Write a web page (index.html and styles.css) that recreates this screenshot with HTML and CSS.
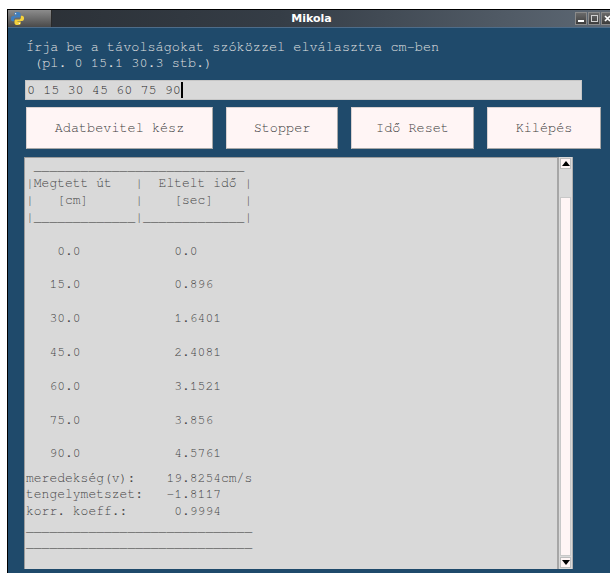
FILE: index.html
```html
<!DOCTYPE html>
<html lang="hu">
<head>
<meta charset="utf-8">
<title>Mikola</title>
<link rel="stylesheet" href="styles.css">
</head>
<body>
<div class="window">
  <div class="titlebar">
    <div class="tb-icon">
      <svg width="15" height="15" viewBox="0 0 16 16">
        <path d="M7.8 1C5 1 4.6 2.2 4.6 3.2V4.8H8V5.4H3.2C1.8 5.4 1 6.5 1 8.2S1.8 11 3.2 11H4.4V9.2C4.4 7.9 5.4 7 6.6 7H9.6C10.6 7 11.2 6.3 11.2 5.4V3.2C11.2 2 10.2 1 7.8 1Z" fill="#3f7fc0"/>
        <circle cx="6" cy="2.8" r="0.7" fill="#fff"/>
        <path d="M8.2 15C11 15 11.4 13.8 11.4 12.8V11.2H8V10.6H12.8C14.2 10.6 15 9.5 15 7.8S14.2 5 12.8 5H11.6V6.8C11.6 8.1 10.6 9 9.4 9H6.4C5.4 9 4.8 9.7 4.8 10.6V12.8C4.8 14 5.8 15 8.2 15Z" fill="#f5d23c"/>
        <circle cx="10" cy="13.2" r="0.7" fill="#fff"/>
      </svg>
    </div>
    <div class="tb-title">Mikola</div>
    <div class="tb-buttons">
      <span class="tb-btn"><span class="ic-min"></span></span>
      <span class="tb-btn"><span class="ic-max"></span></span>
      <span class="tb-btn">
        <svg width="7" height="7" viewBox="0 0 7 7"><path d="M1 1L6 6M6 1L1 6" stroke="#fff" stroke-width="1.6"/></svg>
      </span>
    </div>
  </div>

  <div class="client">
    <p class="prompt">Írja be a távolságokat szóközzel elválasztva cm-ben
 (pl. 0 15.1 30.3 stb.)</p>

    <div class="entry"><span>0 15 30 45 60 75 90</span><span class="caret"></span></div>

    <div class="buttons">
      <button class="btn btn-input">Adatbevitel kész</button>
      <button class="btn btn-stop">Stopper</button>
      <button class="btn btn-reset">Idő Reset</button>
      <button class="btn btn-quit">Kilépés</button>
    </div>

    <div class="output">
      <div class="text">
<pre class="table"> ___________________________
|Megtett út   |  Eltelt idő |
|   [cm]      |    [sec]    |
|_____________|_____________|

    0.0            0.0

   15.0            0.896

   30.0            1.6401

   45.0            2.4081

   60.0            3.1521

   75.0            3.856

   90.0            4.5761</pre>
<pre class="summary">meredekség(v):    19.8254cm/s
tengelymetszet:   -1.8117
korr. koeff.:      0.9994
_____________________________
_____________________________</pre>
      </div>
      <div class="scrollbar">
        <span class="sb-arrow up"></span>
        <span class="sb-trough"></span>
        <span class="sb-thumb"></span>
        <span class="sb-arrow down"></span>
      </div>
    </div>
  </div>
</div>
</body>
</html>
```

FILE: styles.css
```css
html, body {
  margin: 0;
  height: 573px;
  overflow: hidden;
  background: #ffffff;
}

.window {
  margin: 9px 0 0 7px;
  height: 563px;
  border-top: 1px solid #000;
  border-left: 1px solid #000;
  display: flex;
  flex-direction: column;
  background: #1f4a6b;
}

/* window manager title bar */
.titlebar {
  height: 17px;
  display: flex;
  align-items: center;
  background: linear-gradient(to right, #2a2f35 0%, #353d46 45%, #5d6874 100%);
  border-bottom: 1px solid #4e6d8a;
}

.tb-icon {
  width: 44px;
  height: 17px;
  display: flex;
  align-items: center;
  padding-left: 2px;
  box-sizing: border-box;
  background: linear-gradient(#8c8c8c, #4a4a4a);
  border-right: 1px solid #2a2a2a;
}

.tb-title {
  flex: 1;
  text-align: center;
  font: bold 11px "DejaVu Sans", sans-serif;
  color: #ffffff;
  padding-right: 4px;
}

.tb-buttons {
  display: flex;
  gap: 1px;
  width: 35px;
  overflow: hidden;
}

.tb-btn {
  flex: none;
  width: 12px;
  height: 13px;
  box-sizing: border-box;
  border: 1px solid #8a8a8a;
  background: linear-gradient(#6a6a6a, #3c3c3c);
  display: flex;
  align-items: center;
  justify-content: center;
}

.ic-min {
  width: 6px;
  height: 2px;
  background: #fff;
  margin-top: 5px;
}

.ic-max {
  width: 5px;
  height: 5px;
  border: 1px solid #d0d0d0;
}

/* application area; Tk "Courier" look */
.client {
  flex: 1;
  padding: 11px 0 0 16px;
  font-family: "Nimbus Mono PS", "Nimbus Mono L", "FreeMono", "Courier New", "Courier", "Liberation Mono", monospace;
}

.prompt {
  margin: 0 0 0 2px;
  font-size: 13.5px;
  line-height: 16px;
  color: #e2e2e2;
  white-space: pre;
}

.entry {
  margin: 9px 0 0 1px;
  width: 557px;
  height: 20px;
  box-sizing: border-box;
  background: #d9d9d9;
  border: 1px solid #c6c6c6;
  padding-left: 1px;
  display: flex;
  align-items: center;
  font-size: 13.5px;
  color: #2a2a2a;
  white-space: pre;
}

.caret {
  width: 2px;
  height: 16px;
  background: #000;
}

.buttons {
  margin: 7px 0 0 2px;
  display: flex;
  gap: 13px;
}

.btn {
  height: 42px;
  padding: 0;
  background: #fff5f5;
  border: 1px solid;
  border-color: #d8d0d0 #a8a8a8 #a8a8a8 #d8d0d0;
  font-family: inherit;
  font-size: 13.5px;
  color: #3a3a3a;
}

.btn-input { width: 187px; }
.btn-stop  { width: 112px; }
.btn-reset { width: 123px; }
.btn-quit  { width: 114px; }

/* results text box */
.output {
  margin-top: 8px;
  width: 549px;
  height: 412px;
  display: flex;
}

.text {
  flex: 1;
  background: #d9d9d9;
  border-top: 1px solid #9c9c9c;
  border-left: 1px solid #9c9c9c;
  padding: 1px 0 0 1px;
  overflow: hidden;
  color: #444;
  font-size: 13px;
}

.text pre {
  margin: 0;
  font-family: inherit;
  font-size: 13px;
}

.table {
  line-height: 16.9px;
}

.text .summary {
  margin-top: 7.6px;
  line-height: 16.3px;
}

.scrollbar {
  width: 16px;
  box-sizing: border-box;
  background: #d9d9d9;
  border-left: 2px solid #a6a6a6;
  border-right: 1px solid #b0b0b0;
  padding: 1px 1px 0 1px;
  display: flex;
  flex-direction: column;
}

.sb-arrow {
  height: 11px;
  flex: none;
  background: #fff5f5;
  border: 1px solid #bdbdbd;
  box-sizing: border-box;
  display: flex;
  align-items: center;
  justify-content: center;
}

.sb-arrow::after {
  content: "";
  border-left: 4px solid transparent;
  border-right: 4px solid transparent;
}

.sb-arrow.up::after { border-bottom: 5px solid #000; }
.sb-arrow.down::after { border-top: 5px solid #000; }

.sb-trough {
  height: 28px;
  flex: none;
}

.sb-thumb {
  flex: 1;
  background: #fff5f5;
  border: 1px solid #c8c8c8;
  margin-bottom: 1px;
}

.sb-arrow.down {
  margin-bottom: 1px;
}
```
